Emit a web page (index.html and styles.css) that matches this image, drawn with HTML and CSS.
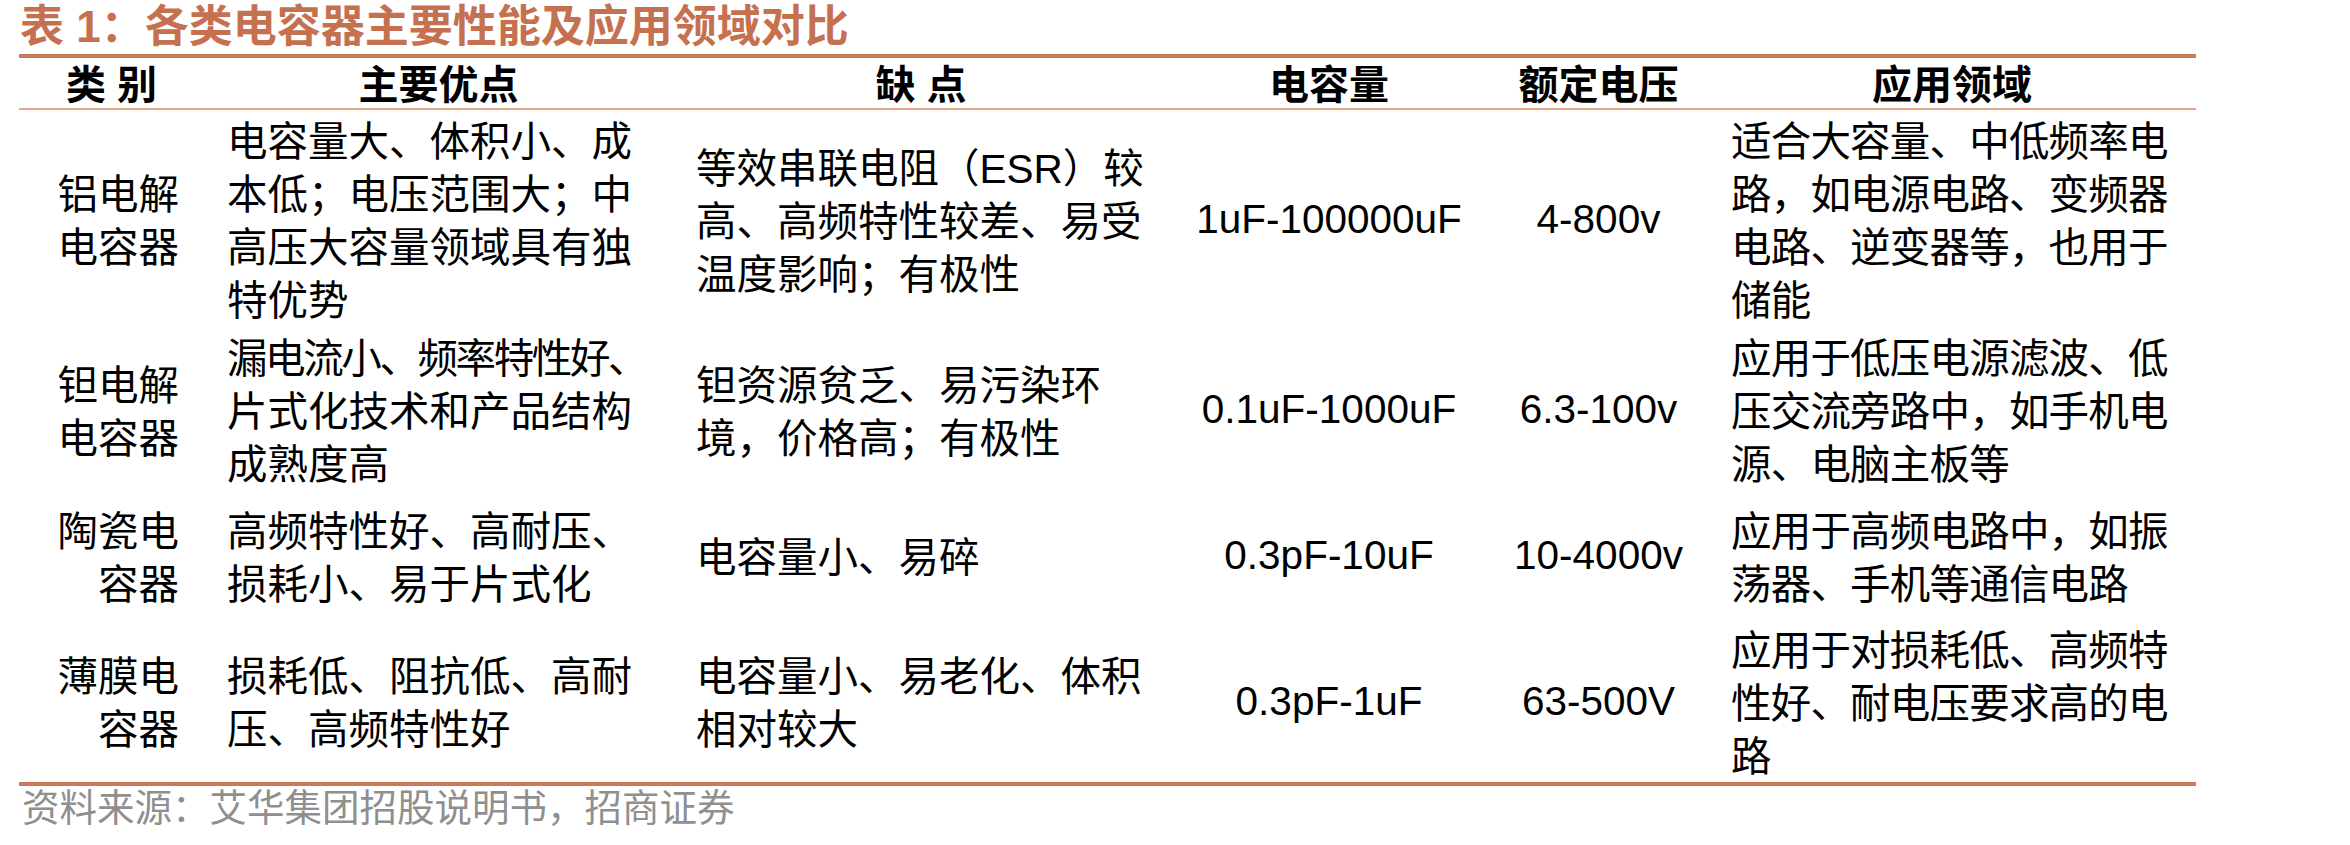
FILE: index.html
```html
<!DOCTYPE html>
<html lang="zh-CN">
<head>
<meta charset="utf-8">
<title>表1：各类电容器主要性能及应用领域对比</title>
<link rel="stylesheet" href="styles.css">
</head>
<body>
<div class="page">
  <h1 class="title">表 1：各类电容器主要性能及应用领域对比</h1>
  <div class="table">
    <div class="th">类 别</div>
    <div class="th">主要优点</div>
    <div class="th">缺 点</div>
    <div class="th">电容量</div>
    <div class="th">额定电压</div>
    <div class="th">应用领域</div>

    <div class="td c1"><div class="tx">铝电解<br>电容器</div></div>
    <div class="td c2"><div class="tx">电容量大、体积小、成<br>本低；电压范围大；中<br>高压大容量领域具有独<br>特优势</div></div>
    <div class="td c3"><div class="tx">等效串联电阻（ESR）较<br>高、高频特性较差、易受<br>温度影响；有极性</div></div>
    <div class="td num"><div class="tx">1uF-100000uF</div></div>
    <div class="td num"><div class="tx">4-800v</div></div>
    <div class="td c6"><div class="tx">适合大容量、中低频率电<br>路，如电源电路、变频器<br>电路、逆变器等，也用于<br>储能</div></div>

    <div class="td c1"><div class="tx">钽电解<br>电容器</div></div>
    <div class="td c2"><div class="tx"><span class="sq">漏电流小、频率特性好、</span><br>片式化技术和产品结构<br>成熟度高</div></div>
    <div class="td c3"><div class="tx">钽资源贫乏、易污染环<br>境，价格高；有极性</div></div>
    <div class="td num"><div class="tx">0.1uF-1000uF</div></div>
    <div class="td num"><div class="tx">6.3-100v</div></div>
    <div class="td c6"><div class="tx">应用于低压电源滤波、低<br>压交流旁路中，如手机电<br>源、电脑主板等</div></div>

    <div class="td c1"><div class="tx">陶瓷电<br>容器</div></div>
    <div class="td c2"><div class="tx">高频特性好、高耐压、<br>损耗小、易于片式化</div></div>
    <div class="td c3"><div class="tx">电容量小、易碎</div></div>
    <div class="td num"><div class="tx">0.3pF-10uF</div></div>
    <div class="td num"><div class="tx">10-4000v</div></div>
    <div class="td c6"><div class="tx">应用于高频电路中，如振<br>荡器、手机等通信电路</div></div>

    <div class="td c1"><div class="tx">薄膜电<br>容器</div></div>
    <div class="td c2"><div class="tx">损耗低、阻抗低、高耐<br>压、高频特性好</div></div>
    <div class="td c3"><div class="tx">电容量小、易老化、体积<br>相对较大</div></div>
    <div class="td num"><div class="tx">0.3pF-1uF</div></div>
    <div class="td num"><div class="tx">63-500V</div></div>
    <div class="td c6"><div class="tx">应用于对损耗低、高频特<br>性好、耐电压要求高的电<br>路</div></div>
  </div>
  <p class="source">资料来源：艾华集团招股说明书，招商证券</p>
</div>
</body>
</html>
```

FILE: styles.css
```css
html, body {
  margin: 0;
  padding: 0;
  background: #ffffff;
}

body {
  font-family: "Liberation Sans", "Noto Sans CJK SC", sans-serif;
  color: #000000;
}

.page {
  padding-left: 19px;
  width: 2177px;
}

.title {
  margin: 0;
  height: 54px;
  padding-left: 1px;
  font-size: 44px;
  line-height: 53px;
  font-weight: 700;
  color: #c5714f;
  white-space: nowrap;
}

.table {
  display: grid;
  grid-template-columns: 185px 469px 496px 320px 219px 488px;
  grid-template-rows: 52px 218px 163px 129px 162px;
  border-top: 4px solid #c97a5b;
  border-bottom: 4px solid #c97a5b;
}

.th {
  box-sizing: border-box;
  display: flex;
  align-items: center;
  justify-content: center;
  padding-top: 3px;
  border-bottom: 2px solid #e5a788;
  font-size: 40px;
  line-height: 46px;
  font-weight: 700;
  white-space: nowrap;
}

.td {
  box-sizing: border-box;
  display: flex;
  flex-direction: column;
  justify-content: center;
  padding-top: 6px;
  font-size: 40.5px;
  line-height: 53px;
  font-weight: 400;
  white-space: nowrap;
}

.c1 {
  text-align: right;
  padding-right: 25px;
}

.c2,
.c3,
.c6 {
  text-align: left;
  padding-left: 23px;
}

.c6 {
  letter-spacing: -0.8px;
}

.sq {
  letter-spacing: -2.4px;
}

.num {
  text-align: center;
  padding-top: 0;
}

.source {
  margin: 0;
  padding-left: 3px;
  font-size: 37.5px;
  line-height: 45px;
  font-weight: 400;
  color: #8f8f8f;
  white-space: nowrap;
}
```
